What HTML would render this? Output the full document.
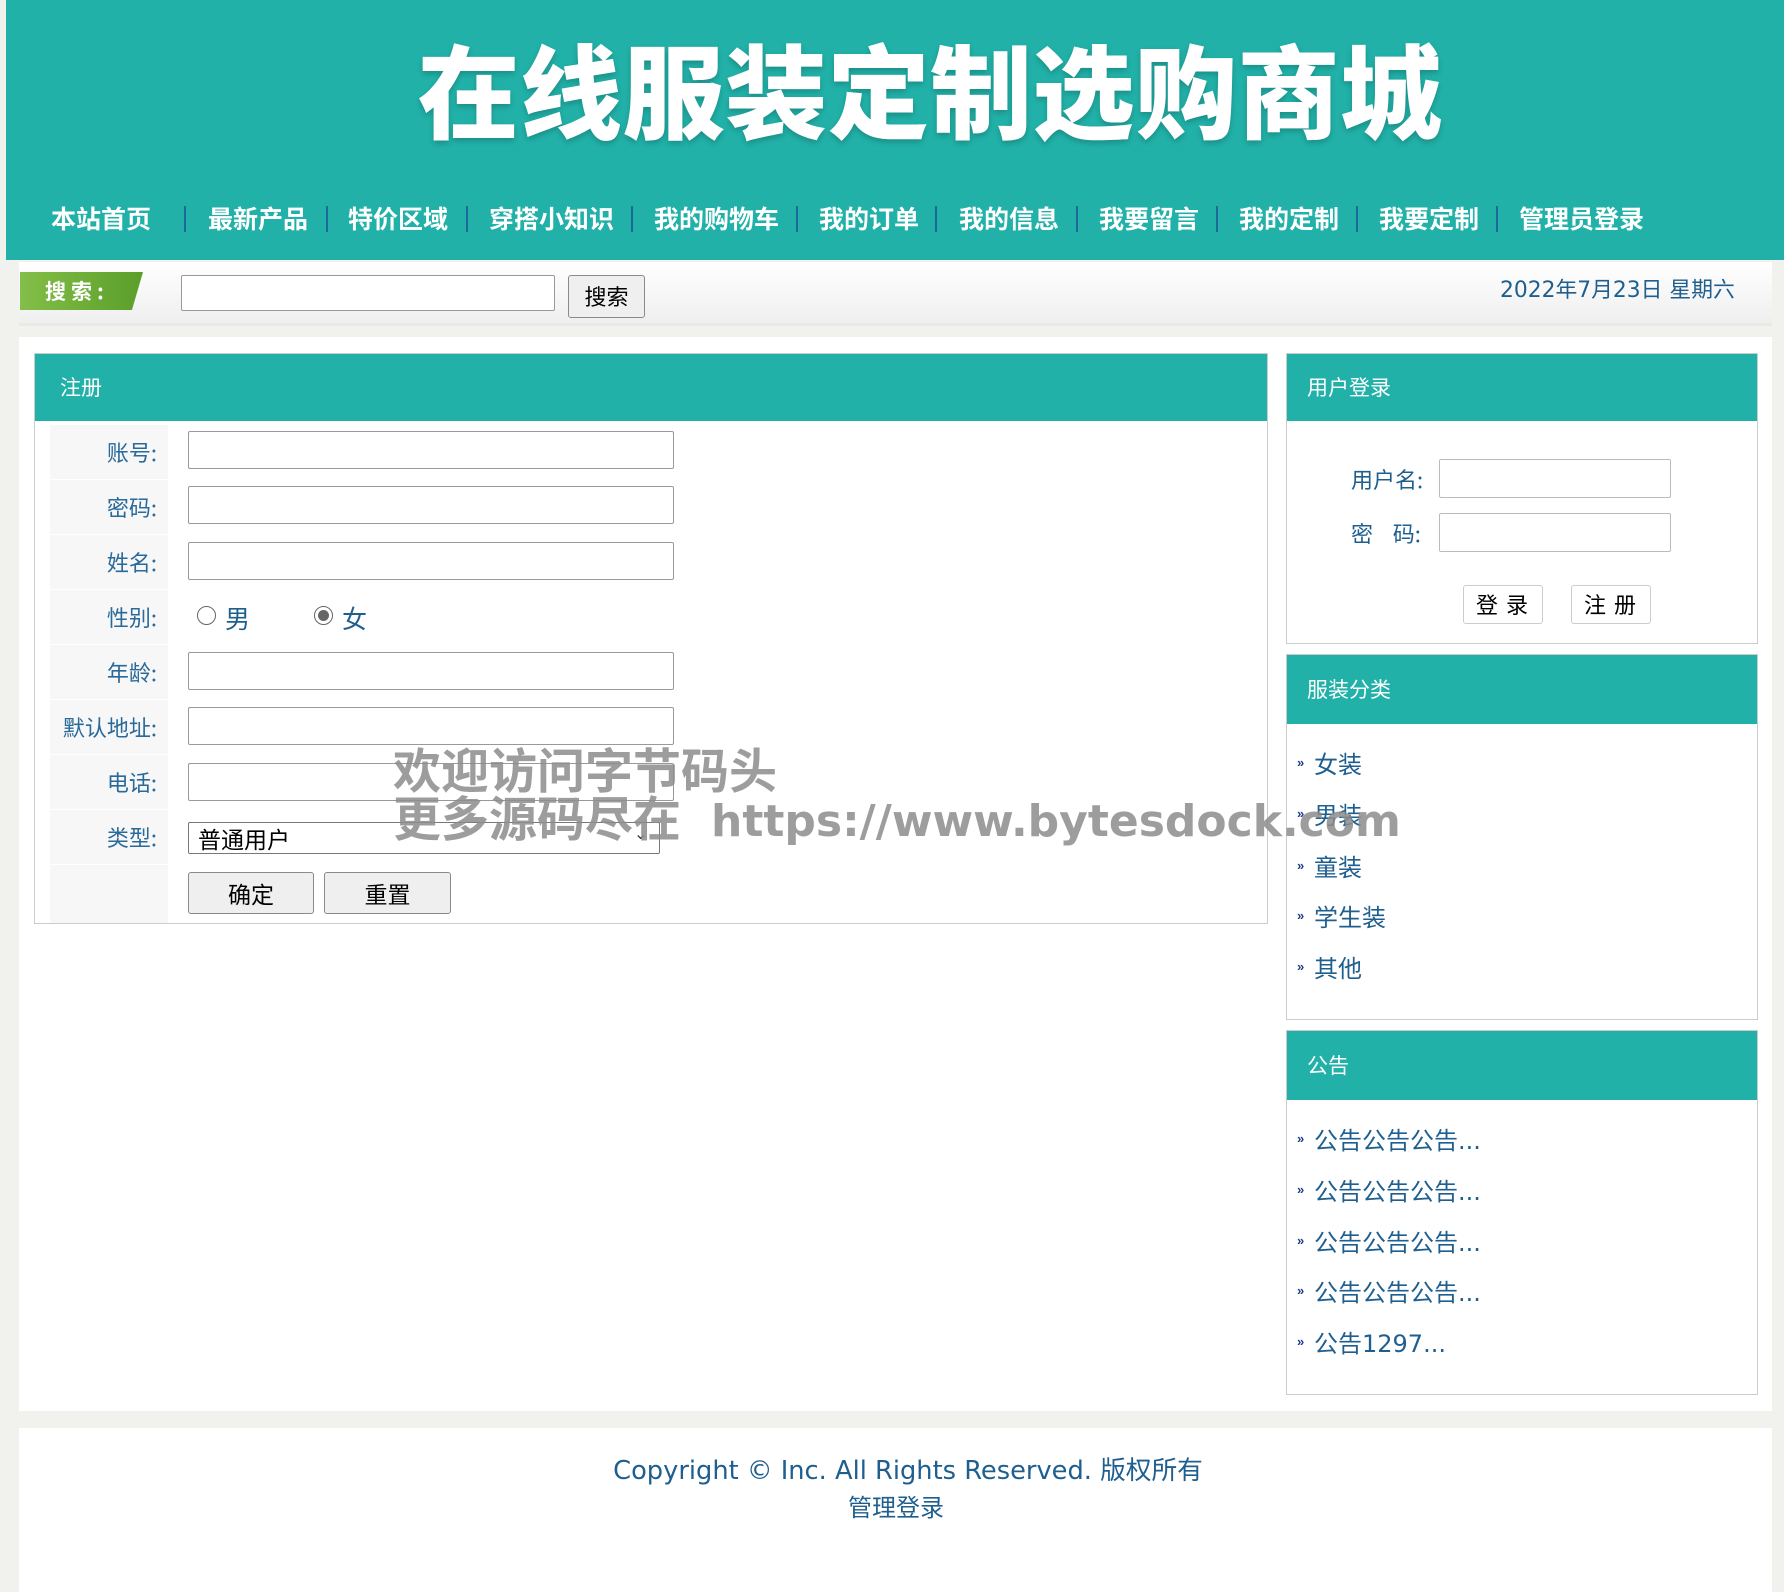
<!DOCTYPE html>
<html><head><meta charset="utf-8">
<style>
*{margin:0;padding:0;box-sizing:border-box}
body{width:1784px;height:1592px;background:#f1f1ed;position:relative;overflow:hidden;font-family:"Liberation Sans","Noto Sans CJK SC",sans-serif;}
.a{position:absolute}
.hdr{left:6px;top:0;width:1778px;height:260px;background:#21b1a8}
.title{left:38px;width:1784px;top:26px;text-align:center;color:#fff;font-size:102px;font-weight:900;letter-spacing:0.5px;font-family:"Noto Sans CJK SC",sans-serif;text-shadow:0 3px 6px rgba(0,0,0,.2);line-height:124px}
.nav{top:202px;color:#fff;font-size:25px;font-weight:bold;font-family:"Noto Sans CJK SC",sans-serif;line-height:32px;white-space:nowrap}
.sep{top:206px;width:2px;height:26px;background:#1a6a9a}
.sbar{left:19px;top:262px;width:1753px;height:64px;background:linear-gradient(#fff,#efefef);border-bottom:3px solid #e9e9e6}
.slab{left:20px;top:272px;width:123px;height:38px;background:linear-gradient(90deg,#83bf48,#5a9e2a);clip-path:polygon(0 0,100% 0,91% 100%,0 100%);color:#fff;font-weight:bold;font-size:21px;line-height:38px;padding-left:25px;letter-spacing:5px;font-family:"Noto Sans CJK SC",sans-serif}
.inp{background:#fff;border:1px solid #999;border-radius:2px}
.btn{background:#efefef;border:1px solid #8a8a8a;border-radius:3px;text-align:center;color:#000;font-family:"Noto Sans CJK SC",sans-serif}
.main{left:19px;top:337px;width:1753px;height:1074px;background:#fff}
.panel{border:1px solid #ccc;background:#fff}
.ph{background:#21b1a8;color:#fff;font-size:21px;font-family:"Noto Sans CJK SC",sans-serif;padding-left:20px}
.lab{left:50px;width:118px;height:54px;background:#f7f7f7;color:#2a6a9a;font-size:22px;text-align:right;padding-right:11px;line-height:54px;font-family:"Noto Sans CJK SC",sans-serif}
.blue{color:#1f5f8f;font-family:"Noto Sans CJK SC",sans-serif}
.li{font-size:24px;color:#1f5f8f;font-family:"DejaVu Sans","Noto Sans CJK SC",sans-serif}
.bul{font-size:13px;color:#1b3f8a;font-weight:bold;line-height:12px}
.wm{color:rgba(140,140,140,.85);font-size:48px;font-weight:bold;font-family:"DejaVu Sans","Noto Sans CJK SC",sans-serif;white-space:pre}
</style></head><body>
<div class="a hdr"></div>
<div class="a title">在线服装定制选购商城</div>
<div class="a nav" style="left:51px">本站首页</div>
<div class="a nav" style="left:208px">最新产品</div>
<div class="a nav" style="left:348px">特价区域</div>
<div class="a nav" style="left:489px">穿搭小知识</div>
<div class="a nav" style="left:654px">我的购物车</div>
<div class="a nav" style="left:819px">我的订单</div>
<div class="a nav" style="left:959px">我的信息</div>
<div class="a nav" style="left:1099px">我要留言</div>
<div class="a nav" style="left:1239px">我的定制</div>
<div class="a nav" style="left:1379px">我要定制</div>
<div class="a nav" style="left:1519px">管理员登录</div>
<div class="a sep" style="left:184px"></div><div class="a sep" style="left:326px"></div><div class="a sep" style="left:466px"></div><div class="a sep" style="left:631px"></div><div class="a sep" style="left:796px"></div><div class="a sep" style="left:935px"></div><div class="a sep" style="left:1076px"></div><div class="a sep" style="left:1216px"></div><div class="a sep" style="left:1356px"></div><div class="a sep" style="left:1496px"></div>

<div class="a sbar"></div>
<div class="a slab">搜索:</div>
<div class="a inp" style="left:181px;top:275px;width:374px;height:36px"></div>
<div class="a btn" style="left:568px;top:275px;width:77px;height:43px;font-size:22px;line-height:41px">搜索</div>
<div class="a blue" style="left:1500px;top:276px;font-size:21.8px;line-height:30px;font-family:'DejaVu Sans','Noto Sans CJK SC',sans-serif">2022年7月23日 星期六</div>

<div class="a main"></div>
<!-- register -->
<div class="a panel" style="left:34px;top:353px;width:1234px;height:571px"></div>
<div class="a ph" style="left:35px;top:354px;width:1232px;height:67px;line-height:67px;padding-left:25px">注册</div>
<div class="a lab" style="top:425px">账号:</div>
<div class="a lab" style="top:480px">密码:</div>
<div class="a lab" style="top:535px">姓名:</div>
<div class="a lab" style="top:590px">性别:</div>
<div class="a lab" style="top:645px">年龄:</div>
<div class="a lab" style="top:700px">默认地址:</div>
<div class="a lab" style="top:755px">电话:</div>
<div class="a lab" style="top:810px">类型:</div>
<div class="a lab" style="top:865px;height:58px"></div>
<div class="a inp" style="left:188px;top:431px;width:486px;height:38px"></div>
<div class="a inp" style="left:188px;top:486px;width:486px;height:38px"></div>
<div class="a inp" style="left:188px;top:542px;width:486px;height:38px"></div>
<div class="a inp" style="left:188px;top:652px;width:486px;height:38px"></div>
<div class="a inp" style="left:188px;top:707px;width:486px;height:38px"></div>
<div class="a inp" style="left:188px;top:763px;width:486px;height:38px"></div>
<div class="a" style="left:197px;top:606px;width:19px;height:19px;border:1px solid #666;border-radius:50%;background:#fff"></div>
<div class="a blue" style="left:225px;top:602px;font-size:25px;line-height:32px">男</div>
<div class="a" style="left:314px;top:606px;width:19px;height:19px;border:1px solid #666;border-radius:50%;background:#fff"></div>
<div class="a" style="left:318px;top:610px;width:11px;height:11px;border-radius:50%;background:#666"></div>
<div class="a blue" style="left:342px;top:602px;font-size:25px;line-height:32px">女</div>
<div class="a inp" style="left:188px;top:822px;width:472px;height:32px;border-color:#777"></div>
<div class="a" style="left:198px;top:822px;font-size:23px;line-height:32px;color:#000;font-family:'Noto Sans CJK SC',sans-serif">普通用户</div>
<div class="a" style="left:634px;top:824px;font-size:16px;color:#333">⌄</div>
<div class="a btn" style="left:188px;top:872px;width:126px;height:42px;font-size:23px;line-height:40px">确定</div>
<div class="a btn" style="left:324px;top:872px;width:127px;height:42px;font-size:23px;line-height:40px">重置</div>

<!-- login -->
<div class="a panel" style="left:1286px;top:353px;width:472px;height:291px"></div>
<div class="a ph" style="left:1287px;top:354px;width:470px;height:67px;line-height:67px">用户登录</div>
<div class="a blue" style="left:1351px;top:463px;font-size:22px;line-height:32px">用户名:</div>
<div class="a blue" style="left:1351px;top:517px;font-size:22px;line-height:32px;white-space:pre">密    码:</div>
<div class="a inp" style="left:1439px;top:459px;width:232px;height:39px;border-color:#bbb"></div>
<div class="a inp" style="left:1439px;top:513px;width:232px;height:39px;border-color:#bbb"></div>
<div class="a btn" style="left:1463px;top:585px;width:80px;height:39px;font-size:22px;line-height:37px;background:#fff;border-color:#ccc;letter-spacing:8px;padding-left:6px">登录</div>
<div class="a btn" style="left:1571px;top:585px;width:80px;height:39px;font-size:22px;line-height:37px;background:#fff;border-color:#ccc;letter-spacing:8px;padding-left:6px">注册</div>

<!-- category -->
<div class="a panel" style="left:1286px;top:654px;width:472px;height:366px"></div>
<div class="a ph" style="left:1287px;top:655px;width:470px;height:69px;line-height:69px">服装分类</div>
<div class="a bul" style="left:1297px;top:757px">»</div><div class="a li" style="left:1314px;top:745px">女装</div>
<div class="a bul" style="left:1297px;top:808px">»</div><div class="a li" style="left:1314px;top:796px">男装</div>
<div class="a bul" style="left:1297px;top:860px">»</div><div class="a li" style="left:1314px;top:848px">童装</div>
<div class="a bul" style="left:1297px;top:910px">»</div><div class="a li" style="left:1314px;top:898px">学生装</div>
<div class="a bul" style="left:1297px;top:961px">»</div><div class="a li" style="left:1314px;top:949px">其他</div>

<!-- notice -->
<div class="a panel" style="left:1286px;top:1030px;width:472px;height:365px"></div>
<div class="a ph" style="left:1287px;top:1031px;width:470px;height:69px;line-height:69px">公告</div>
<div class="a bul" style="left:1297px;top:1133px">»</div><div class="a li" style="left:1314px;top:1121px">公告公告公告...</div>
<div class="a bul" style="left:1297px;top:1184px">»</div><div class="a li" style="left:1314px;top:1172px">公告公告公告...</div>
<div class="a bul" style="left:1297px;top:1235px">»</div><div class="a li" style="left:1314px;top:1223px">公告公告公告...</div>
<div class="a bul" style="left:1297px;top:1285px">»</div><div class="a li" style="left:1314px;top:1273px">公告公告公告...</div>
<div class="a bul" style="left:1297px;top:1336px">»</div><div class="a li" style="left:1314px;top:1324px">公告1297...</div>

<!-- footer -->
<div class="a" style="left:19px;top:1428px;width:1753px;height:164px;background:#fff"></div>
<div class="a blue" style="left:16px;width:1784px;text-align:center;top:1455px;font-size:25.7px;line-height:32px;font-family:'DejaVu Sans','Noto Sans CJK SC',sans-serif">Copyright © Inc. All Rights Reserved. 版权所有</div>
<div class="a blue" style="left:4px;width:1784px;text-align:center;top:1490px;font-size:24px;line-height:32px">管理登录</div>

<!-- watermark -->
<div class="a wm" style="left:393px;top:744px;line-height:56px">欢迎访问字节码头</div>
<div class="a wm" style="left:393px;top:792px;line-height:56px">更多源码尽在</div>
<div class="a wm" style="left:711px;top:794px;line-height:56px;font-size:44px">https://www.bytesdock.com</div>
</body></html>
